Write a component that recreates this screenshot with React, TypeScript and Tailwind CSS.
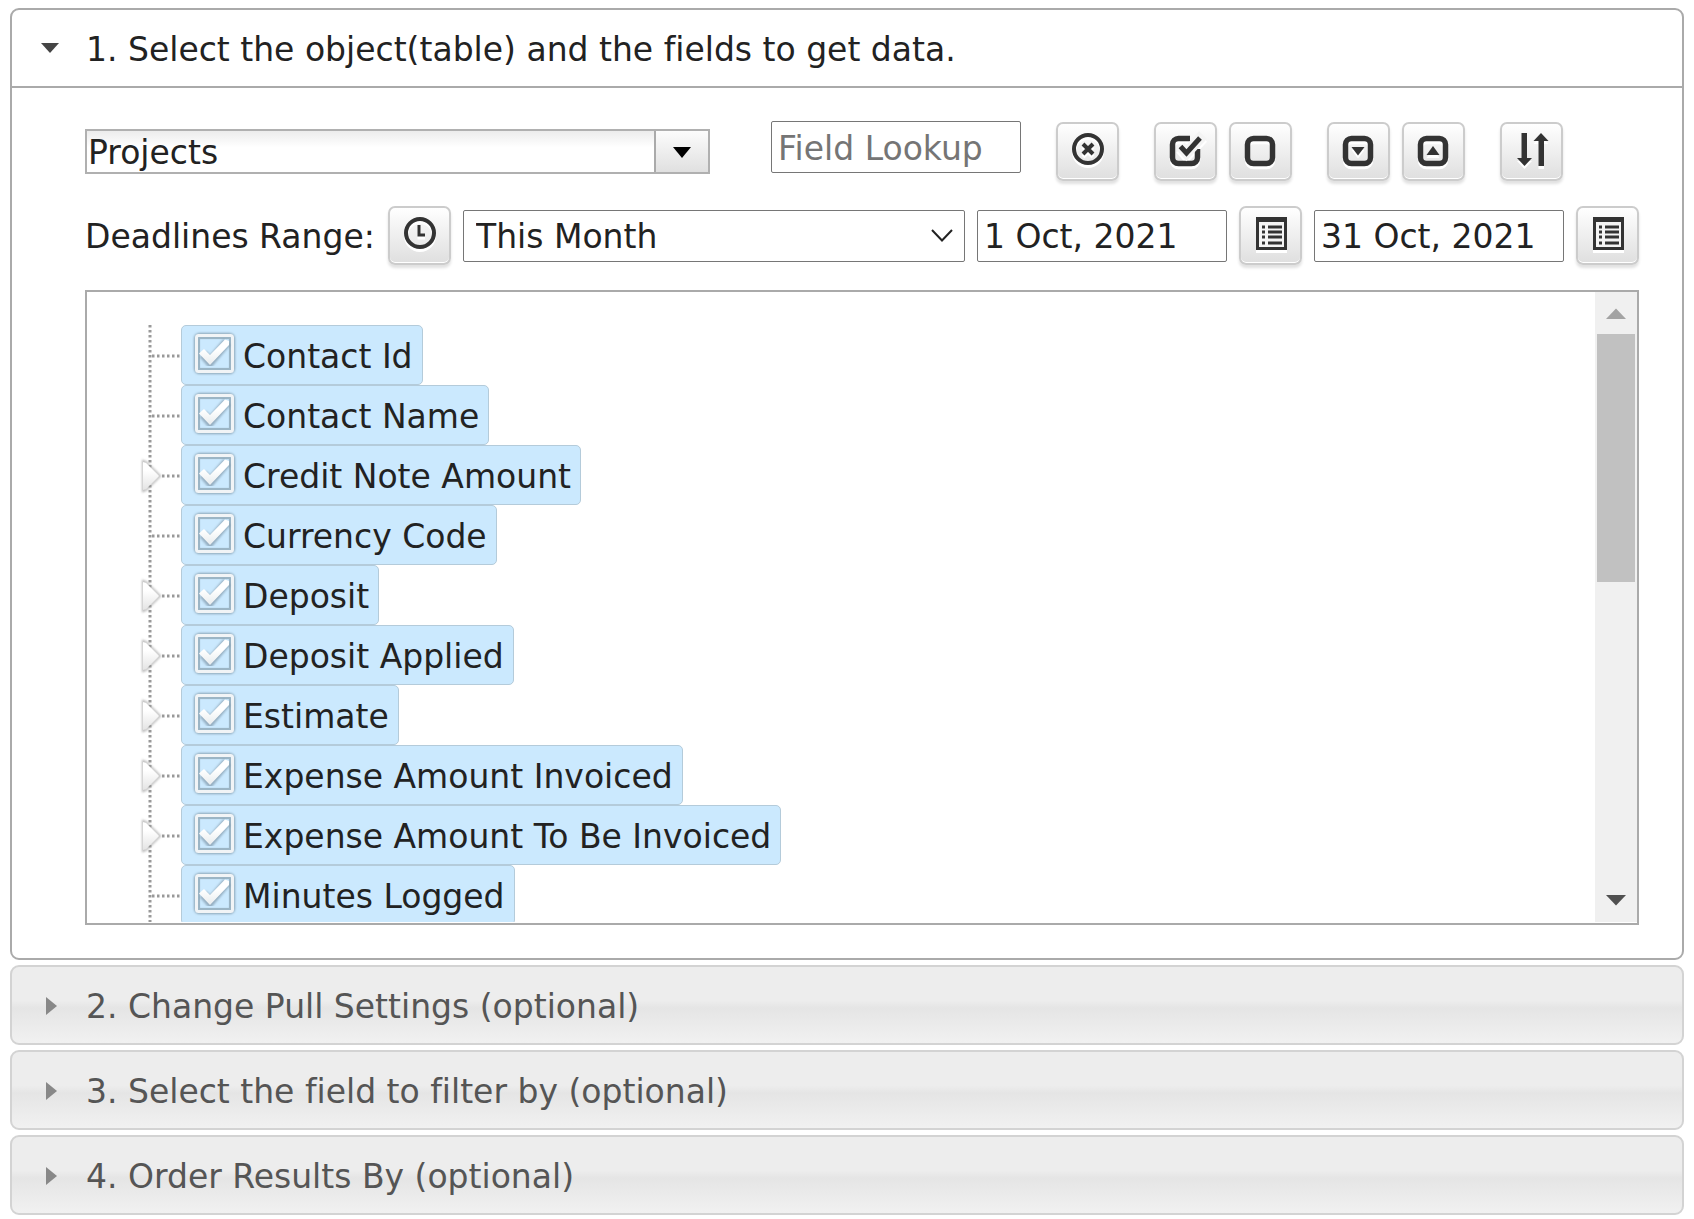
import { useState } from "react";
import type { ReactNode } from "react";

interface Field {
    name: string;
    expandable?: boolean;
}

const fields: Field[] = [
    { name: "Contact Id" },
    { name: "Contact Name" },
    { name: "Credit Note Amount", expandable: true },
    { name: "Currency Code" },
    { name: "Deposit", expandable: true },
    { name: "Deposit Applied", expandable: true },
    { name: "Estimate", expandable: true },
    { name: "Expense Amount Invoiced", expandable: true },
    { name: "Expense Amount To Be Invoiced", expandable: true },
    { name: "Minutes Logged" },
];

const closedSections = [
    "2. Change Pull Settings (optional)",
    "3. Select the field to filter by (optional)",
    "4. Order Results By (optional)",
];

const IconButton = ({ label, children }: { label: string; children: ReactNode }) => {
    return (
        <button
            type="button"
            aria-label={label}
            className="flex h-[59px] w-[63px] shrink-0 justify-center rounded-[7px] border-2 border-[#cccccc] bg-linear-to-b from-white to-[#dfdfdf] pt-2 shadow-[0_3px_3px_rgba(0,0,0,0.12),inset_0_-1px_0_#fff]"
        >
            <svg viewBox="0 0 36 36" className="size-9 overflow-visible drop-shadow-[0_3px_0_#fff]" fill="none" stroke="#333">
                {children}
            </svg>
        </button>
    );
};

const RoundBox = () => <rect x="4.500" y="6.500" width="25" height="25" rx="6" strokeWidth="5.500" />;

const CalendarIcon = () => {
    return (
        <>
            <rect x="3" y="1" width="31" height="33" fill="#333" stroke="none" />
            <rect x="6" y="6" width="25" height="25" fill="#f4f4f4" stroke="none" />
            {[11, 16, 21, 27].map((y) => (
                <path key={y} d={`M9 ${y}h3M15 ${y}h14`} strokeWidth="3" />
            ))}
        </>
    );
};

const TreeLines = ({ expandable }: { expandable?: boolean }) => {
    return (
        <svg viewBox="0 0 94 60" className="h-[60px] w-[94px] shrink-0" fill="none">
            <path d="M63 0v60" stroke="#999" strokeWidth="3" strokeDasharray="2.5 2.5" />
            <path d={expandable ? "M75 31h19" : "M65 31h29"} stroke="#999" strokeWidth="3" strokeDasharray="2.5 2.5" />
            {expandable && (
                <>
                    <path d="M56 16v30l3-1 14-14-14-14z" stroke="#999" strokeOpacity="0.7" strokeWidth="2" filter="url(#soft)" />
                    <path d="M56 17v28l3-1 13-13-13-13z" fill="url(#arrowFill)" />
                </>
            )}
        </svg>
    );
};

const FieldRow = ({ field }: { field: Field }) => {
    const [checked, setChecked] = useState(true);
    return (
        <li className="flex h-[60px]">
            <TreeLines expandable={field.expandable} />
            <label className="flex items-center gap-[9px] rounded-[5px] border border-[#b4cbda] bg-[#cbe9fe] pl-3 pr-[9px] whitespace-nowrap">
                <span className="relative mb-1 size-10">
                    <input
                        type="checkbox"
                        checked={checked}
                        onChange={() => setChecked(!checked)}
                        className="absolute inset-0 size-10 appearance-none"
                    />
                    <svg viewBox="0 0 40 40" className="pointer-events-none absolute inset-0 size-10 overflow-visible" fill="none">
                        <rect x="2.5" y="2.5" width="36" height="36" rx="3" stroke="#7c95a5" strokeOpacity="0.8" strokeWidth="5" filter="url(#soft)" />
                        <rect x="5" y="5" width="31" height="31" stroke="#9bb5c5" strokeWidth="2" />
                        <rect x="2.5" y="2.5" width="36" height="36" rx="2" stroke="#f1f4f6" strokeWidth="3" />
                        {checked && (
                            <>
                                <path d="M9 21l7 8L33 9" stroke="#6f8797" strokeOpacity="0.6" strokeWidth="9" filter="url(#soft)" />
                                <path d="M5 20.500l5-4.500 6 6L31 6.500l4 1.500v4L16 32z" fill="url(#tickFill)" />
                            </>
                        )}
                    </svg>
                </span>
                <span className="pt-1">{field.name}</span>
            </label>
        </li>
    );
};

const ScrollBar = () => {
    return (
        <div aria-hidden="true" className="flex w-[42px] shrink-0 flex-col items-center bg-[#f0f0f0]">
            <svg viewBox="0 0 42 42" className="size-[42px]">
                <path d="M11 27l10-10.500L31 27z" fill="#a3a3a3" />
            </svg>
            <div className="h-[248px] w-[38px] bg-[#c1c1c1]" />
            <svg viewBox="0 0 42 42" className="mt-auto size-[42px]">
                <path d="M11 15l10 10.500L31 15z" fill="#505050" />
            </svg>
        </div>
    );
};

const textBox = "h-[52px] w-[250px] shrink-0 rounded-[2px] border border-[#767676] bg-white px-[6px] pt-0.5 placeholder:text-[#757575]";

const App = () => {
    return (
        <main className="bg-white px-[10px] pt-2 pb-1 font-['DejaVu_Sans',Verdana,sans-serif] text-[33px] leading-[40px] text-[#222222] [font-variant-ligatures:none]">
            <svg className="absolute size-0" aria-hidden="true">
                <defs>
                    <linearGradient id="arrowFill" x1="0" y1="0" x2="0" y2="1">
                        <stop offset="0.3" stopColor="#fff" />
                        <stop offset="1" stopColor="#e4e4e4" />
                    </linearGradient>
                    <linearGradient id="tickFill" x1="0" y1="0" x2="0" y2="1">
                        <stop offset="0.4" stopColor="#fff" />
                        <stop offset="1" stopColor="#e8ecee" />
                    </linearGradient>
                    <filter id="soft" x="-20%" y="-20%" width="140%" height="140%">
                        <feGaussianBlur stdDeviation="1" />
                    </filter>
                </defs>
            </svg>

            <section className="rounded-[9px] border-2 border-[#aaaaaa]">
                <h3 className="border-b-2 border-[#aaaaaa]">
                    <button type="button" aria-expanded="true" className="flex h-[76px] w-full items-center pt-1 pl-[28px] text-left">
                        <svg viewBox="0 0 20 20" className="mr-[26px] mb-1 size-5">
                            <path d="M1 5h18l-9 10z" fill="#454545" />
                        </svg>
                        1. Select the object(table) and the fields to get data.
                    </button>
                </h3>

                <div className="flex flex-col gap-[25px] pt-[33px] pr-[43px] pb-[33px] pl-[73px]">
                    <div className="flex items-center gap-[35px]">
                        <div className="flex h-[45px] w-[625px] border-2 border-[#b0b0b0]">
                            <input
                                type="text"
                                aria-label="Object"
                                defaultValue="Projects"
                                className="min-w-0 flex-1 bg-linear-to-b from-[#ececec] to-white to-40% pt-1 pl-px"
                            />
                            <button
                                type="button"
                                aria-label="Show objects"
                                className="flex w-[54px] items-center justify-center border-l-2 border-[#aaaaaa] bg-linear-to-b from-[#fcfcfc] to-[#e0e0e0]"
                            >
                                <svg viewBox="0 0 20 20" className="size-5">
                                    <path d="M1 6h18l-9 11z" fill="#000" />
                                </svg>
                            </button>
                        </div>
                        <input type="text" aria-label="Field Lookup" placeholder="Field Lookup" className={`${textBox} mb-2 ml-[26px]`} />
                        <IconButton label="Clear lookup">
                            <circle cx="18" cy="17" r="14" strokeWidth="4" />
                            <path d="M13 12l10 10M23 12l-10 10" strokeWidth="4" />
                        </IconButton>
                        <div className="flex gap-3">
                            <IconButton label="Select all">
                                <path d="M22 6.500H10.500A6 6 0 0 0 4.500 12.500v13a6 6 0 0 0 6 6h13a6 6 0 0 0 6-6V17" strokeWidth="5.500" />
                                <path d="M12.500 14l6 7L35 3" stroke="#f4f4f4" strokeWidth="11" />
                                <path d="M12.500 14.500l6 6.500L32 6" strokeWidth="5" />
                            </IconButton>
                            <IconButton label="Clear all">
                                <RoundBox />
                            </IconButton>
                        </div>
                        <div className="flex gap-3">
                            <IconButton label="Expand all">
                                <RoundBox />
                                <path d="M10.500 15h13L17 23.500z" fill="#333" stroke="none" />
                            </IconButton>
                            <IconButton label="Collapse all">
                                <RoundBox />
                                <path d="M10.500 23h13L17 14z" fill="#333" stroke="none" />
                            </IconButton>
                        </div>
                        <IconButton label="Sort">
                            <path d="M7.500 1h5.500v25h5l-7.500 8L3 26h4.500zM24.500 34H30V9h4.500L27 1l-7.500 8h5z" fill="#333" stroke="none" />
                        </IconButton>
                    </div>

                    <div className="flex items-center gap-3">
                        <label htmlFor="range" className="w-[291px] shrink-0 pt-0.5 whitespace-nowrap">
                            Deadlines Range:
                        </label>
                        <IconButton label="Time">
                            <circle cx="18" cy="17" r="14" strokeWidth="4" />
                            <path d="M17 9v10h6" strokeWidth="3" />
                        </IconButton>
                        <div className="relative min-w-0 flex-1">
                            <select
                                id="range"
                                defaultValue="This Month"
                                className="block h-[52px] w-full appearance-none rounded-[2px] border border-[#767676] bg-white pt-0.5 pr-12 pl-3"
                            >
                                <option>This Month</option>
                            </select>
                            <svg viewBox="0 0 22 14" className="pointer-events-none absolute top-[19px] right-3 h-[14px] w-[22px]" fill="none">
                                <path d="M1 1l10 10.500L21 1" stroke="#222" strokeWidth="2" />
                            </svg>
                        </div>
                        <input type="text" aria-label="From date" defaultValue="1 Oct, 2021" className={textBox} />
                        <IconButton label="Pick from date">
                            <CalendarIcon />
                        </IconButton>
                        <input type="text" aria-label="To date" defaultValue="31 Oct, 2021" className={textBox} />
                        <IconButton label="Pick to date">
                            <CalendarIcon />
                        </IconButton>
                    </div>

                    <div className="flex h-[635px] border-2 border-[#aaaaaa] pb-px">
                        <ul className="flex-1 overflow-hidden pt-[33px]">
                            {fields.map((field) => (
                                <FieldRow key={field.name} field={field} />
                            ))}
                        </ul>
                        <ScrollBar />
                    </div>
                </div>
            </section>

            {closedSections.map((title) => (
                <h3 key={title} className="mt-[5px]">
                    <button
                        type="button"
                        aria-expanded="false"
                        className="flex h-[80px] w-full items-center rounded-[9px] border-2 border-[#d3d3d3] bg-[linear-gradient(#ededed_44%,#e5e5e5_54%,#f1f1f1)] pt-1 pl-[28px] text-left text-[#555555]"
                    >
                        <svg viewBox="0 0 20 20" className="mr-[26px] mb-0.5 size-5">
                            <path d="M6 1v18l11-9z" fill="#888" />
                        </svg>
                        {title}
                    </button>
                </h3>
            ))}
        </main>
    );
};

export default App;
